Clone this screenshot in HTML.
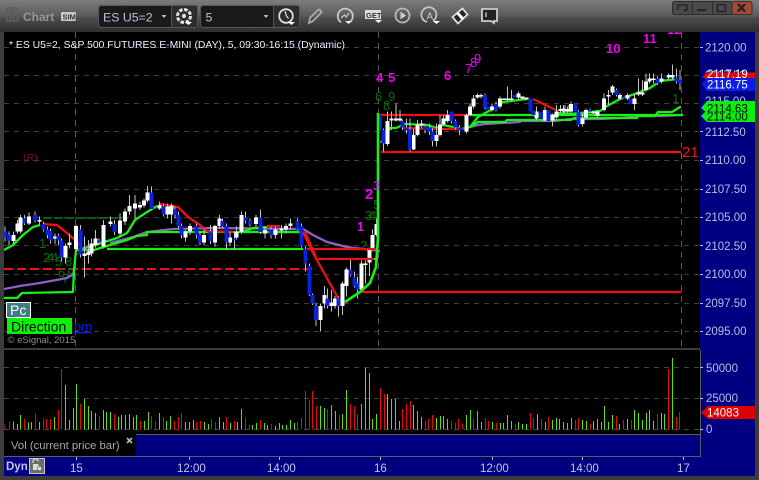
<!DOCTYPE html>
<html><head><meta charset="utf-8"><style>
html,body{margin:0;padding:0;background:#3a3a3a;width:759px;height:480px;overflow:hidden}
svg{display:block}
text{font-family:"Liberation Sans",sans-serif}
.ax{fill:#bcbce6;font-size:11.5px}
.ti{fill:#c4c4e8;font-size:11.5px}
.m{fill:#f000f0;font-weight:bold;font-size:13px}
.d{fill:#0e6a0e;font-size:13px}
</style></head><body>
<svg xmlns="http://www.w3.org/2000/svg" width="759" height="480" viewBox="0 0 759 480">
<defs>
<linearGradient id="tb" x1="0" y1="0" x2="0" y2="1"><stop offset="0" stop-color="#7c7c7c"/><stop offset=".5" stop-color="#5a5a5a"/><stop offset=".55" stop-color="#4e4e4e"/><stop offset="1" stop-color="#2e2e2e"/></linearGradient>
<clipPath id="mc"><rect x="4" y="32" width="696" height="316"/></clipPath>
</defs>
<rect width="759" height="480" fill="#3c3c3c"/>
<rect width="759" height="32" fill="url(#tb)"/>
<!-- toolbar -->
<g fill="none" stroke="#5c5c5c" stroke-width="1.5"><rect x="7" y="8" width="4" height="13"/><rect x="13.500" y="8" width="4" height="13"/></g>
<text x="23" y="21" font-size="12" font-weight="bold" fill="#969696">Chart</text>
<rect x="61" y="12" width="15" height="9" rx="1" fill="#c8c8c8"/><text x="62.500" y="19.500" font-size="7.500" font-weight="bold" fill="#333">SIM</text>
<rect x="98.500" y="5.500" width="99" height="22" rx="3" fill="#1a1a1a" stroke="#555"/>
<rect x="200.500" y="5.500" width="99" height="22" rx="3" fill="#1a1a1a" stroke="#555"/>
<rect x="172" y="6" width="25" height="21" fill="#2c2c2c"/><rect x="274" y="6" width="25" height="21" fill="#2c2c2c"/>
<path d="M171.500 6V27M273.500 6V27" stroke="#555"/>
<text x="103" y="21.500" font-size="12.300" fill="#b4c4dc">ES U5=2</text>
<text x="205.500" y="21.500" font-size="12.300" fill="#c8c8b8">5</text>
<path d="M161.500 15h5l-2.500 3zM263.500 15h5l-2.500 3z" fill="#bbb"/>
<!-- gear -->
<circle cx="184" cy="16" r="6.500" fill="none" stroke="#e4e4e4" stroke-width="3" stroke-dasharray="3.500 1.600"/>
<circle cx="184" cy="16" r="2.200" fill="#ddd"/>
<path d="M185 22h7l-3.500 3z" fill="#fff"/>
<!-- clock -->
<circle cx="286" cy="16" r="6.800" fill="none" stroke="#ddd" stroke-width="1.800"/>
<path d="M285 11l1.500 5 2 2.500" fill="none" stroke="#ddd" stroke-width="1.300"/>
<path d="M288 22h7l-3.500 3z" fill="#fff"/>
<!-- pencil -->
<path d="M309 23l1-5 8-8c1.500-1 4 1 3 3l-8 8z" fill="none" stroke="#aaa" stroke-width="1.800"/>
<!-- gauge -->
<path d="M341 22.300A7.500 7.500 0 1 1 350 22" fill="none" stroke="#c4c4c4" stroke-width="1.900"/>
<path d="M341 18l3.500-3 1.500 2 3-4" fill="none" stroke="#c4c4c4" stroke-width="1.300"/>
<path d="M345 21h7l-3.500 3z" fill="#eee"/>
<!-- GET -->
<rect x="365" y="10" width="16" height="9" fill="#ddd"/><text x="366" y="18" font-size="7.500" font-weight="bold" fill="#333">GET</text>
<path d="M375 20h7l-3.500 3z" fill="#fff"/>
<!-- play -->
<circle cx="402.500" cy="15.500" r="7" fill="none" stroke="#b8b8b8" stroke-width="1.800"/><path d="M400.500 11.500l5.500 4-5.500 4z" fill="#ccc"/>
<!-- A -->
<path d="M427 22a7.500 7.500 0 1 1 6-1" fill="none" stroke="#c4c4c4" stroke-width="1.800"/>
<text x="426.500" y="19.500" font-size="10" fill="#ccc">A</text>
<path d="M433 21h7l-3.500 3z" fill="#fff"/>
<!-- ticket -->
<path d="M458 23.500l-5.500-6.500 10-8.500 5 6z" fill="#222" stroke="#ddd" stroke-width="1.800"/>
<path d="M457.500 13l5.500 6" stroke="#fff" stroke-width="3"/>
<!-- note -->
<path d="M482 9h15v12h-3v2l-3-2h-9z" fill="#222" stroke="#ccc" stroke-width="1.800"/>
<path d="M486 12.500v4.500" stroke="#ddd" stroke-width="1.300"/>
<!-- window controls -->
<rect x="672.500" y="1.500" width="60" height="13" rx="2" fill="#4a4a4a" stroke="#2c2c2c"/>
<rect x="732" y="1.500" width="20" height="13" rx="2" fill="#a04a38" stroke="#3c2c2c"/>
<path d="M692.500 2v12M712.500 2v12" stroke="#2c2c2c"/>
<path d="M678 10V5h9v5" fill="none" stroke="#222" stroke-width="1.300"/><path d="M683 9h5l-2.500 3z" fill="#222"/>
<rect x="697" y="9" width="9" height="2" fill="#222"/>
<rect x="717.500" y="4.500" width="8" height="7" fill="none" stroke="#222" stroke-width="1.300"/>
<path d="M738 4l7 7.500M745 4l-7 7.500" stroke="#222" stroke-width="2.200"/>

<!-- chart panels -->
<rect x="4" y="32" width="696" height="316" fill="#000"/>
<rect x="4" y="350" width="696" height="84" fill="#000"/>
<rect x="700" y="32" width="55" height="444" fill="#000080"/>
<rect x="4" y="434" width="132" height="22" fill="#000"/>
<rect x="136" y="435" width="564" height="21" fill="#000080"/>
<rect x="4" y="457" width="696" height="19" fill="#000080"/>
<path d="M136 434.500H700M4 456.500H700M700.500 350V457" stroke="#5c5c5c"/>

<g clip-path="url(#mc)">
<!-- grid -->
<g stroke="#3e3e3e" stroke-dasharray="5 5" fill="none">
<path d="M4 47.500H700M4 75.500H700M4 103.500H700M4 131.500H700M4 160.500H700M4 189.500H700M4 217.500H700M4 245.500H700M4 274.500H700M4 303.500H700M4 331.500H700"/>
</g>
<path d="M75.500 32V348M378.500 32V348M681.500 32V348" stroke="#5a5a5a" stroke-dasharray="6 5"/>
<path d="M43 218H128" stroke="#0a6a0a" stroke-width="1.800" stroke-dasharray="9 2"/>
<path d="M4 269H313" stroke="#f01010" stroke-width="2" stroke-dasharray="9 4"/>

<!-- numbers -->
<g class="d">
<text x="39" y="248">1</text><text x="43" y="262">2</text><text x="47" y="262">4</text><text x="51" y="262">4</text><text x="55" y="266">5</text><text x="65" y="266">8</text><text x="58" y="277">6</text><text x="67" y="277">9</text><text x="62" y="283">7</text>
<text x="360" y="250">2</text><text x="365" y="220">3</text><text x="369" y="220">4</text><text x="373" y="209">5</text>
<text x="375" y="101">6</text><text x="388" y="101">9</text><text x="383" y="110">8</text><text x="672" y="103">1</text>
</g>
<text x="23" y="161" font-size="10.500" fill="#8a1010">(R)</text>

<!-- MA lines below candles -->
<g fill="none" stroke-linejoin="round">
<path stroke="#9060c8" stroke-width="2.300" d="M4 289L20 286 40 283 67 278 75 273M110 243L133 237 147 232 173 229 215 228 303 229 313 235 327 242 347 247 380 251M470 127L478 125 485 124 520 122 520 121 555 121 570 119 600 119 620 118 640 116 660 116 682 115"/>
<path stroke="#18f018" stroke-width="2.300" d="M4 298L17 298 22 293 73 292 74 270 76 250 94 250 110 245 127 240 137 236 147 235 147 232 200 232 300 232"/>
<path stroke="#18f018" stroke-width="2.300" d="M107 249H303M470 127L478 122 505 122 507 120 570 120 575 118 637 118 638 116 655 116 658 112 672 112 680 107 681 107"/>
<path stroke="#18f018" stroke-width="2.300" d="M470 115H683"/>
<path stroke="#18f018" stroke-width="2.300" d="M4 250L13 245 23 235 33 227 40 225M78 250L95 245 117 238 127 233 135 220 147 212 157 206M243 232L253 228 267 227M270 232L300 232M381 143L390 128 396 128 405 124 427 125 437 128 443 125 453 127 462 129 470 127 478 117 487 112 493 109 503 102 527 99M558 113L570 114 600 111 607 106 620 99 632 95 650 88 660 81 678 79"/>
<path stroke="#f01010" stroke-width="2.300" d="M43 224L57 225 67 233 75 240 82 248M160 204L178 207 188 217 200 225 207 231 233 232M267 226L280 226M403 128L445 129 463 129M533 99L558 111"/>
<path stroke="#f01010" stroke-width="2.200" d="M378 115H470M381 152H681"/>
</g>

<!-- candles -->
<g shape-rendering="crispEdges">
<g transform="translate(0 170) scale(.33333)" fill="none">
<path stroke="#c4c4c4" stroke-width="3" d="M15 170V215M27 185V225M40 185V220M52 150V190M62 135V190M73 135V165M87 128V165M105 125V158M118 140V165M130 155V185M142 170V205M152 175V220M165 190V222M175 190V225M185 205V275M197 220V280M208 190V235M228 165V240M241 165V262M253 200V322M265 210V280M275 205V260M287 180V232M297 205V225M310 150V235M332 140V170M343 150V195M360 130V200M375 115V165M388 75V135M405 75V145M420 95V120M432 85V112M443 48V98M455 50V122M478 95V120M490 100V140M502 100V145M515 100V160M525 110V145M535 125V175M545 160V205M557 180V215M570 160V195M590 160V205M600 185V225"/>
<path stroke="#fff" stroke-width="12" d="M40 195V213M52 160V185M62 143V185M87 140V160M118 150V155M165 200V205M197 228V263M208 218V225M228 168V237M253 250V258M265 245V255M275 220V250M287 205V225M310 165V230M332 155V162M360 152V190M375 125V155M388 108V125M405 100V115M420 105V112M432 92V107M443 67V92M478 105V115M502 110V133M515 107V133M557 185V203M570 168V185"/>
<path stroke="#0a22e0" stroke-width="12" d="M15 185V203M27 195V212M73 145V160M105 135V152M130 162V178M142 178V195M152 183V212M175 196V212M185 212V262M241 178V253M297 212V218M343 162V186M455 67V117M490 110V133M525 118V135M535 135V168M545 168V195M590 168V195M600 195V218"/>
</g>
<g transform="translate(200 170) scale(.33333)" fill="none">
<path stroke="#c4c4c4" stroke-width="3" d="M12 175V225M32 165V222M45 165V230M58 135V175M67 145V175M79 160V238M90 185V228M103 190V238M110 170V210M124 125V192M137 125V160M150 145V170M168 135V170M181 118V192M195 170V205M213 170V205M227 170V205M245 165V205M258 160V190M272 145V178M292 145V182M304 160V232M317 230V305M329 280V378M338 370V405M348 400V468M361 400V485M373 348V415M382 355V415M395 360V425M405 378V415M416 378V440M428 335V435M440 292V380M452 265V320M463 305V352M472 320V385M485 272V365M497 272V340M509 232V318M517 178V240M529 145V200"/>
<path stroke="#fff" stroke-width="12" d="M12 195V218M45 168V218M58 145V168M90 203V218M110 186V203M124 135V186M168 143V162M195 180V190M227 178V195M245 175V182M258 168V178M272 160V168M361 408V450M373 375V400M395 398V408M405 385V408M428 340V408M440 298V348M485 280V358M497 280V285M509 237V278M517 195V237M529 162V195"/>
<path stroke="#0a22e0" stroke-width="12" d="M32 185V213M67 153V168M79 168V218M103 205V212M137 143V153M150 153V163M181 143V186M213 178V195M292 153V178M304 168V228M317 237V280M329 288V375M338 375V400M348 408V450M382 385V408M416 385V408M452 298V315M463 323V348M472 340V358"/>
</g>
<g transform="translate(370 40) scale(.33333)" fill="none">
<path stroke="#c4c4c4" stroke-width="3" d="M40 265V335M52 215V318M65 215V270M78 190V245M90 210V245M98 238V270M110 235V280M120 235V335M130 265V330M142 240V290M155 240V262M165 250V280M178 250V285M187 265V320M199 250V320M210 225V290M220 225V258M232 210V248M244 215V250M257 238V270M268 255V285M290 220V280M300 190V228M310 165V205M322 160V175M333 160V175M345 160V208M366 190V215M378 185V215M390 170V205M412 140V185M425 150V185M445 155V178M500 200V240M525 200V245M548 220V260M560 195V235M572 195V218M585 195V220M597 195V218"/>
<path stroke="#fff" stroke-width="12" d="M52 243V312M65 235V242M78 235V242M90 235V242M130 285V328M142 253V285M155 250V257M199 285V303M210 253V285M220 235V253M232 225V243M290 225V275M300 200V225M310 175V200M322 165V172M333 165V170M366 200V210M390 175V200M402 175V180M412 175V180M425 175V180M445 160V172M457 170V175M470 172V178M500 215V235M525 210V242M548 225V242M560 215V233M572 207V213M585 208V215M597 207V213"/>
<path stroke="#0a22e0" stroke-width="12" d="M30 225V270M40 270V310M98 243V262M110 262V270M120 270V328M165 260V270M178 262V275M187 275V303M244 215V243M257 243V262M268 262V270M278 265V272M345 165V202M354 200V210M378 192V210M433 165V172M482 175V215M490 212V225M513 215V235M536 210V243"/>
</g>
<g transform="translate(560 30) scale(.33333)" fill="none">
<path stroke="#c4c4c4" stroke-width="3" d="M10 225V250M22 230V250M33 215V250M55 240V290M67 250V290M78 235V268M90 235V250M112 240V262M132 190V245M145 180V225M157 165V195M170 175V200M180 190V210M202 190V210M224 190V240M235 145V198M247 150V198M258 130V185M268 130V160M280 130V160M292 140V165M305 130V160M325 130V148M337 103V148M350 115V160M360 120V180"/>
<path stroke="#fff" stroke-width="12" d="M10 235V245M22 237V245M33 222V245M67 265V282M78 240V262M100 245V250M112 245V258M132 205V240M145 195V200M157 170V188M180 195V205M202 195V205M224 205V222M235 188V193M247 188V193M258 155V180M268 145V155M280 145V150M305 145V155M325 135V143M337 135V143"/>
<path stroke="#0a22e0" stroke-width="12" d="M46 222V245M55 245V285M90 240V245M170 180V195M190 200V205M212 205V222M292 145V160M315 135V140M350 143V155M360 150V160"/>
</g>
</g>

<!-- lines over candles -->
<g fill="none" stroke-linejoin="round">
<path stroke="#f01010" stroke-width="2.200" d="M303 232L313 253 338 298M305 232L316 257M318 259H377M362 292H681M307 249H377"/>
<path stroke="#18f018" stroke-width="2.600" d="M345 302L360 292 370 283 376 267 378 237 378 113"/>
<path stroke="#18f018" stroke-width="2" d="M374 259H378"/>
</g>

<!-- magenta markers -->
<g class="m">
<text x="357" y="231">1</text><text x="365" y="199" style="font-size:15px">2</text><text x="373" y="190" fill="#d020f0" font-weight="normal">3</text>
<text x="376" y="82">4</text><text x="388" y="82">5</text><text x="444" y="80">6</text><text x="465" y="73" font-weight="normal">7</text><text x="470" y="67" font-weight="normal">8</text><text x="474" y="63" font-weight="normal">9</text>
<text x="606" y="53">10</text><text x="643" y="43">11</text><text x="667" y="34">12</text>
</g>
<text x="682" y="157" font-size="15" fill="#f01818">21</text>

<!-- labels -->
<rect x="6.500" y="302.500" width="24" height="15" fill="#3f7c84" stroke="#fff"/>
<text x="10" y="315" font-size="14" fill="#fff">Pc</text>
<rect x="7" y="318" width="65" height="16" fill="#0bf00b"/>
<text x="11" y="331.500" font-size="14" fill="#000">Direction</text>
<text x="74" y="331" font-size="13" fill="#0a22e0" text-decoration="underline">om</text>
<text x="7.500" y="343" font-size="9.500" fill="#8c8c8c">© eSignal, 2015</text>
</g>

<text x="9" y="48" font-size="10.400" fill="#e6f4ff">* ES U5=2, S&amp;P 500 FUTURES E-MINI (DAY), 5, 09:30-16:15 (Dynamic)</text>

<!-- volume -->
<g shape-rendering="crispEdges"><path d="M4 367.500H700M4 398.500H700M4 429.500H700" stroke="#444" stroke-dasharray="5 5"/></g>
<g shape-rendering="crispEdges" fill="none" stroke-width="3">
<g transform="translate(0 350) scale(.33333)">
<path stroke="#e80808" d="M15 238V220M28 238V214M73 238V207M107 238V190M130 238V204M140 238V207M152 238V207M175 238V180M184 238V57M241 238V162M298 238V198M343 238V192M421 238V213M454 238V198M466 238V213M490 238V201M523 238V213M535 238V201M544 238V189M589 238V216M601 238V213M634 238V207M646 238V216M679 238V201M703 238V213M736 238V204M748 238V225"/>
<path stroke="#5ce012" d="M40 238V214M52 238V222M61 238V195M85 238V218M95 238V216M118 238V216M163 238V201M196 238V105M208 238V210M220 238V174M229 238V102M253 238V147M265 238V168M274 238V183M286 238V189M310 238V180M319 238V186M331 238V186M355 238V201M364 238V195M376 238V195M388 238V192M400 238V201M409 238V195M433 238V213M445 238V186M478 238V189M499 238V213M511 238V198M556 238V216M568 238V216M580 238V210M613 238V216M625 238V222M658 238V201M670 238V216M691 238V219M712 238V216M724 238V177"/>
</g>
<g transform="translate(250 350) scale(.33333)">
<path stroke="#e80808" d="M31 238V210M64 238V222M142 238V216M154 238V204M166 238V123M178 238V150M187 238V123M199 238V168M232 238V177M268 238V195M301 238V162M313 238V168M322 238V192M391 238V114M403 238V132M457 238V177M469 238V162M481 238V153M526 238V213M535 238V207M547 238V195M604 238V213M616 238V219M625 238V207M637 238V222M670 238V204M706 238V204M715 238V213M739 238V219"/>
<path stroke="#5ce012" d="M7 238V225M19 238V219M43 238V219M52 238V225M76 238V228M88 238V219M97 238V225M109 238V225M121 238V210M133 238V219M211 238V168M223 238V174M244 238V165M256 238V183M277 238V192M289 238V120M334 238V162M346 238V54M358 238V69M367 238V207M379 238V192M412 238V132M424 238V147M436 238V147M448 238V213M490 238V165M502 238V183M514 238V201M559 238V204M571 238V198M580 238V198M592 238V207M649 238V195M661 238V180M682 238V183M694 238V216M727 238V216"/>
</g>
<g transform="translate(500 350) scale(.33333)">
<path stroke="#e80808" d="M46 238V222M91 238V189M100 238V204M124 238V207M145 238V201M226 238V210M235 238V204M271 238V222M349 238V198M370 238V210M394 238V210M472 238V192M505 238V57M529 238V201M538 238V186"/>
<path stroke="#5ce012" d="M1 238V219M10 238V219M22 238V195M34 238V213M55 238V216M67 238V222M79 238V222M112 238V192M136 238V216M157 238V210M169 238V204M178 238V207M190 238V216M202 238V219M214 238V204M247 238V210M259 238V213M280 238V213M292 238V207M304 238V216M313 238V168M325 238V216M337 238V195M358 238V222M382 238V207M403 238V180M415 238V189M427 238V210M439 238V189M448 238V180M460 238V213M484 238V189M493 238V192M517 238V24"/>
</g>
</g>

<!-- right axis -->
<path d="M700 47.500h3M700 131.500h3M700 160.500h3M700 189.500h3M700 217.500h3M700 245.500h3M700 274.500h3M700 303.500h3M700 331.500h3M700 367.500h3M700 398.500h3M700 429.500h3" stroke="#b8b8d8"/>
<g class="ax">
<text x="705" y="51.500">2120.00</text>
<text x="705" y="79">2117.50</text>
<text x="705" y="105">2115.00</text>
<text x="705" y="136">2112.50</text>
<text x="705" y="164">2110.00</text>
<text x="705" y="193">2107.50</text>
<text x="705" y="221">2105.00</text>
<text x="705" y="250">2102.50</text>
<text x="705" y="278">2100.00</text>
<text x="705" y="307">2097.50</text>
<text x="705" y="335">2095.00</text>
<text x="706" y="372">50000</text>
<text x="706" y="402">25000</text>
<text x="706" y="433">0</text>
</g>
<!-- tags -->
<path d="M702 77l5-4.500H755V79H707z" fill="#f00000"/>
<text x="707" y="78" font-size="11.500" fill="#fff">2117.19</text>
<path d="M702 84.500l5-6.500H755V91H707z" fill="#0a1ee8"/>
<text x="707" y="88.500" font-size="11.500" fill="#fff">2116.75</text>
<path d="M701 116l6-6H755V122H707z" fill="#0bf00b"/>
<text x="707" y="120.500" font-size="11.500" fill="#000">2114.00</text>
<path d="M701 108l6-7H755V113H707z" fill="#0bf00b"/>
<text x="707" y="112.500" font-size="11.500" fill="#000">2114.63</text>
<path d="M701 412.500l7-6.500H755V419H708z" fill="#dc0000"/>
<text x="707" y="416.500" font-size="11.500" fill="#fff">14083</text>

<!-- volume legend -->
<text x="11" y="449" font-size="11.300" fill="#a8a8a8">Vol (current price bar)</text>
<path d="M127 438l5 5M132 438l-5 5" stroke="#bbb" stroke-width="1.600"/>

<!-- time axis -->
<path d="M76.500 457v3M189.500 457v3M279.500 457v3M380.500 457v3M492.500 457v3M582.500 457v3M683.500 457v3" stroke="#b8b8d8"/>
<g class="ti">
<text x="70" y="472">15</text><text x="177" y="472">12:00</text><text x="267" y="472">14:00</text><text x="374" y="472">16</text><text x="480" y="472">12:00</text><text x="570" y="472">14:00</text><text x="677" y="472">17</text>
</g>
<text x="6" y="470" font-size="11.500" font-weight="bold" fill="#c4c4e8">Dyn</text>
<rect x="29.500" y="458.500" width="15" height="15" fill="#6c6c6c" stroke="#c8c8c8"/>
<path d="M33 463v-1.500a2.500 2.500 0 0 1 5 0" fill="none" stroke="#ddd" stroke-width="1.200"/>
<rect x="33" y="464" width="5.500" height="6" fill="#ddd"/><circle cx="39.500" cy="468.500" r="2.300" fill="#ddd" stroke="#555" stroke-width=".6"/>
</svg>
</body></html>
